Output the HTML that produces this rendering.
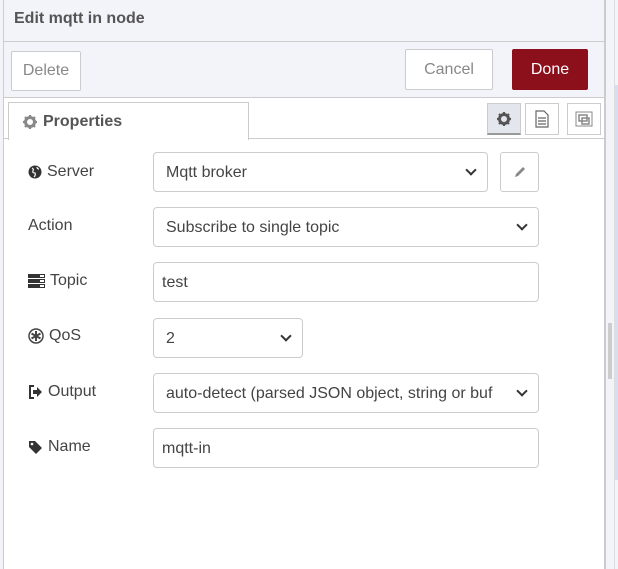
<!DOCTYPE html>
<html><head><style>
*{box-sizing:border-box;margin:0;padding:0}
body{width:618px;height:569px;background:#fff;font-family:"Liberation Sans",sans-serif;position:relative;overflow:hidden;color:#555}
.a{position:absolute}
.btn{position:absolute;border:1px solid #ccc;background:#fff;color:#888;font-size:16px;display:flex;align-items:center;justify-content:center;border-radius:2px}
.lbl{position:absolute;left:28px;font-size:16px;color:#444;display:flex;align-items:center;gap:5px;height:20px}
.fld{position:absolute;left:153px;border:1px solid #ccc;border-radius:4px;background:#fff;height:40px;font-size:16px;color:#444;display:flex;align-items:center;padding-left:12px;padding-top:2px}
.sel::after{content:"";position:absolute;right:12px;top:13px;width:6px;height:6px;border-right:2px solid #333;border-bottom:2px solid #333;transform:rotate(45deg)}
.ib{position:absolute;top:103px;width:34px;height:32px;border:1px solid #ccc;background:#fff;display:flex;align-items:center;justify-content:center}
</style></head><body>
<div class="a" style="left:0;top:0;width:4px;height:569px;background:#f3f3fa;border-right:1px solid #ccc"></div>
<div class="a" style="left:4px;top:0;width:601px;height:98px;background:#f3f3fa"></div>
<div class="a" style="left:4px;top:41px;width:601px;height:1px;background:#ccc"></div>
<div class="a" style="left:14px;top:10px;font-size:16px;font-weight:bold;color:#555">Edit mqtt in node</div>
<div class="btn" style="left:11px;top:51px;width:70px;height:40px;color:#888">Delete</div>
<div class="btn" style="left:405px;top:49px;width:88px;height:41px;color:#888">Cancel</div>
<div class="btn" style="left:512px;top:49px;width:76px;height:41px;background:#8c101c;border-color:#8c101c;color:#fff">Done</div>
<div class="a" style="left:4px;top:97px;width:601px;height:1px;background:#ccc"></div>
<div class="a" style="left:4px;top:138px;width:601px;height:1px;background:#ccc"></div>
<div class="a" style="left:8px;top:102px;width:241px;height:38px;background:#fff;border:1px solid #ccc;border-bottom:none;font-size:16px;font-weight:bold;color:#555;display:flex;align-items:center;padding-left:14px;gap:6px"><svg width="14" height="14" viewBox="0 0 14 14"><circle cx="7" cy="7" r="4.5" fill="none" stroke="#888" stroke-width="3"/><path d="M7 0v3M7 11v3M0 7h3M11 7h3M2 2l2 2M10 10l2 2M2 12l2-2M10 4l2-2" stroke="#888" stroke-width="2.2"/></svg>Properties</div>
<div class="ib" style="left:487px;background:#e4e6ee;border-bottom:2px solid #999"><svg width="14" height="14" viewBox="0 0 14 14"><circle cx="7" cy="7" r="4.5" fill="none" stroke="#555" stroke-width="3"/><path d="M7 0v3M7 11v3M0 7h3M11 7h3M2 2l2 2M10 10l2 2M2 12l2-2M10 4l2-2" stroke="#555" stroke-width="2.2"/></svg></div>
<div class="ib" style="left:525px"><svg width="14" height="18"><path d="M1 1h8l4 4v12H1z M3 8h8 M3 11h8 M3 14h8" fill="none" stroke="#666" stroke-width="1.2"/></svg></div>
<div class="ib" style="left:567px"><svg width="20" height="18"><rect x="2" y="2" width="16" height="14" fill="none" stroke="#888"/><rect x="5" y="5" width="8" height="6" fill="none" stroke="#888" stroke-width="1.5"/><rect x="8" y="8" width="7" height="6" fill="none" stroke="#888" stroke-width="1.5"/></svg></div>
<div class="a" style="left:604px;top:0;width:2px;height:569px;background:#ccc"></div>
<div class="a" style="left:606px;top:0;width:8px;height:569px;background:#f3f3fa"></div>
<div class="a" style="left:608px;top:323px;width:4px;height:56px;background:#ccc"></div>
<div class="a" style="left:614px;top:0;width:1px;height:569px;background:#ddd"></div>
<div class="a" style="left:615px;top:0;width:3px;height:569px;background:#f3f3fa"></div>
<div class="a" style="left:615px;top:85px;width:3px;height:395px;background:#d8def0"></div>

<div class="lbl" style="top:162px"><svg width="14" height="14"><circle cx="7" cy="7" r="6.5" fill="#333"/><path d="M4 3q2 1 1 3t2 2q1 2-1 4M9 2q0 2 2 2" stroke="#fff" stroke-width="1.2" fill="none"/></svg>Server</div>
<div class="fld sel" style="top:152px;width:335px">Mqtt broker</div>
<div class="a" style="left:500px;top:152px;width:39px;height:40px;border:1px solid #ccc;border-radius:3px;display:flex;align-items:center;justify-content:center"><svg width="14" height="14"><path d="M2 12l1-3 7-7 2 2-7 7z" fill="#888"/></svg></div>
<div class="lbl" style="top:216px">Action</div>
<div class="fld sel" style="top:207px;width:386px">Subscribe to single topic</div>
<div class="lbl" style="top:271px"><svg width="17" height="14"><rect y="0" width="17" height="4" fill="#333"/><rect y="5" width="17" height="4" fill="#333"/><rect y="10" width="17" height="4" fill="#333"/><rect x="12" y="1" width="4" height="2" fill="#fff"/><rect x="12" y="6" width="4" height="2" fill="#fff"/><rect x="12" y="11" width="4" height="2" fill="#fff"/></svg>Topic</div>
<div class="fld" style="top:262px;width:386px;padding-left:8px">test</div>
<div class="lbl" style="top:326px"><svg width="16" height="16"><circle cx="8" cy="8" r="7" fill="none" stroke="#444" stroke-width="1.5"/><path d="M8 3v10M3.5 5.5l9 5M3.5 10.5l9-5" stroke="#444" stroke-width="2"/></svg>QoS</div>
<div class="fld sel" style="top:318px;width:150px">2</div>
<div class="lbl" style="top:382px"><svg width="15" height="14"><path d="M6 1H2v12h4" fill="none" stroke="#333" stroke-width="2"/><path d="M5 5h4V2l5 5-5 5V9H5z" fill="#333"/></svg>Output</div>
<div class="fld sel" style="top:373px;width:386px;overflow:hidden;white-space:nowrap;padding-right:30px">auto-detect (parsed JSON object, string or buf</div>
<div class="lbl" style="top:437px"><svg width="15" height="15"><path d="M1 1h6l7 7-6 6-7-7z" fill="#333"/><circle cx="4" cy="4" r="1.3" fill="#fff"/></svg>Name</div>
<div class="fld" style="top:428px;width:386px;padding-left:8px">mqtt-in</div>
</body></html>
